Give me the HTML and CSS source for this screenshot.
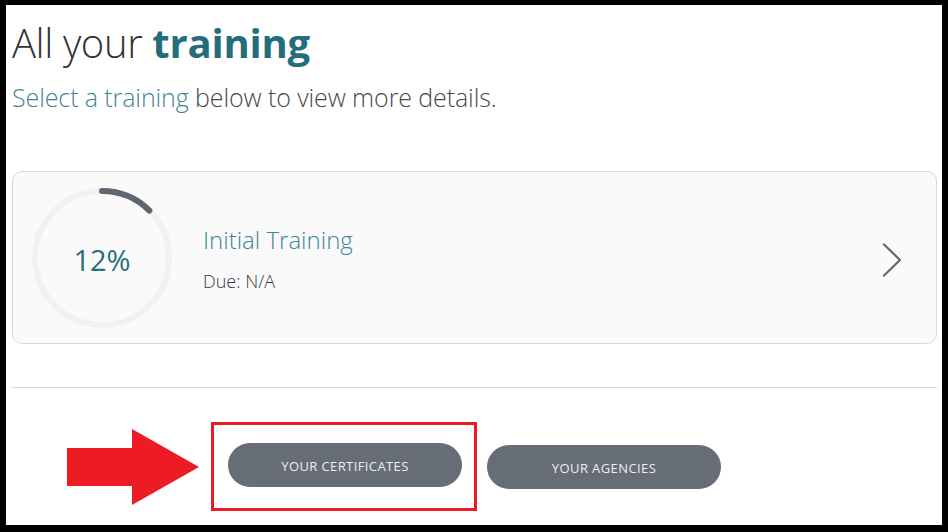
FILE: index.html
```html
<!DOCTYPE html>
<html>
<head>
<meta charset="utf-8">
<link rel="stylesheet" href="styles.css">
</head>
<body>
<div class="page">
  <h1 class="title">All your <strong>training</strong></h1>
  <p class="subtitle"><span class="accent">Select a training</span> below to view more details.</p>

  <div class="card">
    <div class="progress">
      <svg class="ring" width="140" height="140" viewBox="0 0 140 140">
        <circle cx="70" cy="70" r="67" fill="none" stroke="#f1f1f1" stroke-width="6"/>
        <path d="M70 3 A67 67 0 0 1 117.4 22.6" fill="none" stroke="#5f6670" stroke-width="6" stroke-linecap="round"/>
      </svg>
      <span class="pct">12%</span>
    </div>
    <div class="info">
      <div class="name">Initial Training</div>
      <div class="due">Due: N/A</div>
    </div>
    <svg class="chev" width="20" height="34" viewBox="0 0 20 34">
      <path d="M2 1.5 L18 17 L2 32.5" fill="none" stroke="#5f6670" stroke-width="2.2" stroke-linecap="round" stroke-linejoin="round"/>
    </svg>
  </div>

  <hr class="divider">

  <div class="actions">
    <svg class="arrow" width="132" height="76" viewBox="0 0 132 76">
      <polygon points="0,19 65,19 65,0 132,38 65,76 65,57 0,57" fill="#ed1c24"/>
    </svg>
    <div class="highlight">
      <button class="btn">YOUR CERTIFICATES</button>
    </div>
    <button class="btn">YOUR AGENCIES</button>
  </div>
</div>
</body>
</html>
```

FILE: styles.css
```css
html, body {
  margin: 0;
  padding: 0;
  background: #000;
}
body {
  height: 532px;
  overflow: hidden;
  font-family: "Open Sans", "Liberation Sans", sans-serif;
}
.page {
  margin: 5px 6px 0 6px;
  height: 520px;
  background: #fff;
  padding: 0 5px 0 6px;
  box-sizing: border-box;
  overflow: hidden;
}
.title {
  margin: 0;
  padding-top: 13px;
  font-size: 40px;
  font-weight: 300;
  line-height: 50px;
  color: #333;
  letter-spacing: -0.4px;
}
.title strong {
  font-weight: 700;
  color: #256d7b;
  letter-spacing: -0.2px;
}
.subtitle {
  margin: 13px 0 0 0;
  font-size: 25px;
  font-weight: 300;
  line-height: 32px;
  color: #4a4a4a;
  letter-spacing: -0.1px;
}
.subtitle .accent {
  color: #3f8593;
}
.card {
  margin-top: 58px;
  height: 173px;
  box-sizing: border-box;
  border: 1px solid #d9d9d9;
  border-radius: 10px;
  background: #fafafa;
  display: flex;
  align-items: center;
  padding: 0 34px 0 19px;
}
.progress {
  position: relative;
  width: 140px;
  height: 140px;
  flex: none;
  display: flex;
  align-items: center;
  justify-content: center;
  margin-top: 1px;
}
.ring {
  position: absolute;
  left: 0;
  top: 0;
}
.pct {
  position: relative;
  font-size: 29px;
  font-weight: 400;
  color: #2a6e7c;
  margin-top: 2px;
}
.info {
  margin-left: 31px;
  flex: 1;
}
.name {
  font-size: 24px;
  font-weight: 300;
  color: #3d8896;
  line-height: 34px;
}
.due {
  margin-top: 12px;
  font-size: 18px;
  font-weight: 300;
  color: #3a3a3a;
  line-height: 24px;
}
.chev {
  flex: none;
  margin-top: 4px;
}
.divider {
  margin: 43px 0 0 0;
  border: 0;
  height: 1px;
  background: #d8d8d8;
}
.actions {
  display: flex;
  align-items: center;
  margin-top: 34px;
}
.arrow {
  flex: none;
  margin-left: 55px;
  margin-right: 12px;
}
.highlight {
  border: 3px solid #ed1c24;
  padding: 18px 12px 21px 14px;
  margin-right: 10px;
}
.btn {
  display: block;
  width: 234px;
  height: 44px;
  border: 0;
  border-radius: 22px;
  background: #676d76;
  color: #eceef0;
  font-family: "Open Sans", "Liberation Sans", sans-serif;
  font-size: 13px;
  font-weight: 400;
  letter-spacing: 0.4px;
  padding: 2px 0 0 0;
  margin: 0;
}
```
